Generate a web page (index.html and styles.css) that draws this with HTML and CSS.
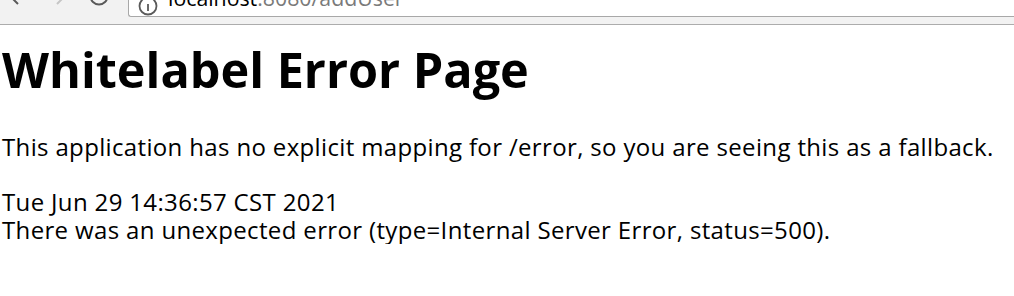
FILE: index.html
```html
<!DOCTYPE html>
<html>
<head>
<meta charset="utf-8">
<title>Error</title>
<link rel="stylesheet" href="styles.css">
</head>
<body>
<header class="chrome">
  <svg class="nav" width="128" height="24" viewBox="0 0 128 24">
    <path d="M18 -12 L10 -4 L18 4" fill="none" stroke="#5a5a5a" stroke-width="2"/>
    <path d="M57 -12 L65 -4 L57 4" fill="none" stroke="#c6c6c6" stroke-width="2"/>
    <circle cx="99" cy="-4" r="8.5" fill="none" stroke="#5a5a5a" stroke-width="2"/>
  </svg>
  <div class="omnibox">
    <svg class="info" width="22" height="40" viewBox="0 0 22 40">
      <circle cx="10" cy="29" r="8.5" fill="none" stroke="#5a5a5a" stroke-width="1.8"/>
      <path d="M10 27 V34" stroke="#5a5a5a" stroke-width="1.8"/>
    </svg>
    <span class="url"><span class="host">localhost</span><span class="path">:8080/addUser</span></span>
  </div>
</header>
<main class="page">
  <h1 class="title">Whitelabel Error Page</h1>
  <p class="lead">This application has no explicit mapping for /error, so you are seeing this as a fallback.</p>
  <div class="line">Tue Jun 29 14:36:57 CST 2021</div>
  <div class="line">There was an unexpected error (type=Internal Server Error, status=500).</div>
</main>
</body>
</html>
```
FILE: styles.css
```css
html, body {
  margin: 0;
  padding: 0;
  background: #ffffff;
}
body {
  font-family: "Open Sans", "Noto Sans", sans-serif;
  color: #000;
}
.chrome {
  height: 24px;
  background: #f2f2f2;
  border-bottom: 1px solid #acacac;
  display: flex;
  align-items: flex-start;
  overflow: hidden;
}
.nav {
  flex: 0 0 128px;
  display: block;
  overflow: visible;
}
.omnibox {
  flex: 1;
  height: 40px;
  margin-top: -23px;
  background: #fff;
  border: 1px solid #a8a8a8;
  border-right: none;
  border-radius: 0 0 0 3px;
  display: flex;
  align-items: flex-end;
  padding-left: 9px;
  box-sizing: border-box;
}
.info {
  display: block;
  flex: 0 0 22px;
  margin-bottom: -1px;
}
.url {
  margin-left: 8px;
  font-size: 21.3px;
  line-height: 20px;
  margin-bottom: 8px;
  white-space: nowrap;
}
.host { color: #000; }
.path { color: #7a7a7a; }

.page {
  padding: 0 2px;
}
.title {
  font-size: 48.6px;
  font-weight: 700;
  line-height: 58px;
  margin: 15px 0 0 0;
}
.lead {
  font-size: 24px;
  letter-spacing: 0.35px;
  line-height: 28px;
  margin: 35px 0 27px 0;
}
.line {
  font-size: 24px;
  letter-spacing: 0.35px;
  line-height: 28px;
}
```
